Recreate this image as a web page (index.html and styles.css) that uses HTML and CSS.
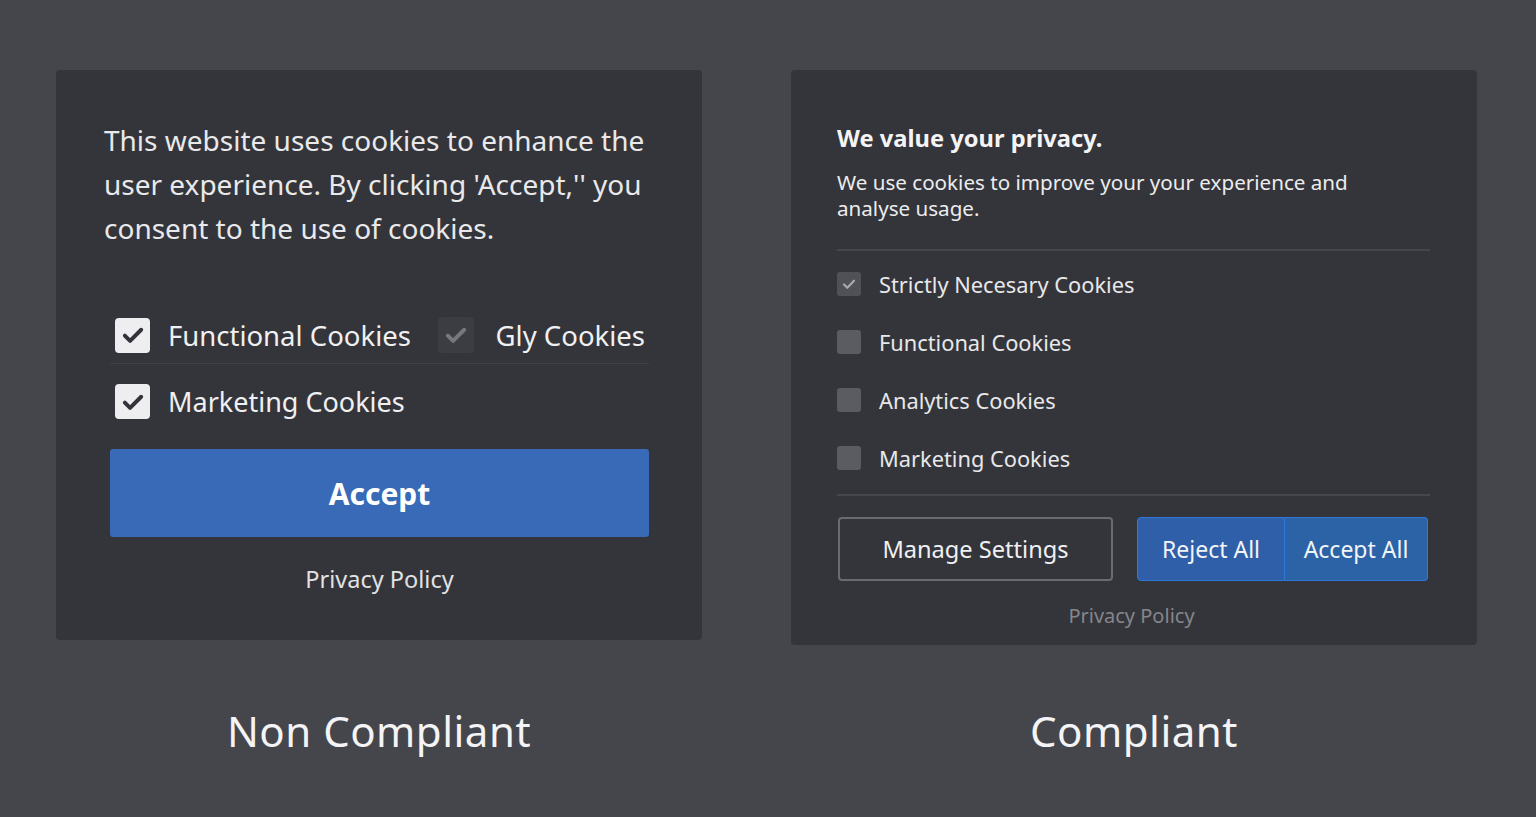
FILE: index.html
```html
<!DOCTYPE html>
<html lang="en">
<head>
    <meta charset="UTF-8">
    <meta name="viewport" content="width=device-width, initial-scale=1.0">
    <title>Cookie Banners - Non Compliant vs Compliant</title>
    <link rel="stylesheet" href="styles.css">
</head>
<body>

<main class="compare">

    <!-- Non compliant banner -->
    <section class="card card-bad">
        <p class="bad-text">This website uses cookies to enhance the<br>user experience. By clicking 'Accept,'' you<br>consent to the use of cookies.</p>

        <div class="bad-options">
            <div class="bad-row bad-row-first">
                <label class="bad-item">
                    <span class="box box-on">
                        <svg viewBox="0 0 24 24"><path d="M5 12.5l4.5 4.5L19 7.5" /></svg>
                    </span>
                    Functional Cookies
                </label>
                <label class="bad-item">
                    <span class="box box-dim">
                        <svg viewBox="0 0 24 24"><path d="M5 12.5l4.5 4.5L19 7.5" /></svg>
                    </span>
                    Gly Cookies
                </label>
            </div>
            <div class="bad-row">
                <label class="bad-item">
                    <span class="box box-on">
                        <svg viewBox="0 0 24 24"><path d="M5 12.5l4.5 4.5L19 7.5" /></svg>
                    </span>
                    Marketing Cookies
                </label>
            </div>
        </div>

        <button class="btn-accept">Accept</button>
        <a class="bad-policy" href="#">Privacy Policy</a>
    </section>

    <!-- Compliant banner -->
    <section class="card card-good">
        <h2 class="good-title">We value your privacy.</h2>
        <p class="good-text">We use cookies to improve your your experience and<br>analyse usage.</p>

        <ul class="good-list">
            <li>
                <span class="sbox sbox-locked">
                    <svg viewBox="0 0 24 24"><path d="M6 12.5l4 4L18 8" /></svg>
                </span>
                Strictly Necesary Cookies
            </li>
            <li><span class="sbox"></span>Functional Cookies</li>
            <li><span class="sbox"></span>Analytics Cookies</li>
            <li><span class="sbox"></span>Marketing Cookies</li>
        </ul>

        <div class="good-actions">
            <button class="btn-outline">Manage Settings</button>
            <div class="btn-pair">
                <button class="btn-blue">Reject All</button>
                <button class="btn-blue">Accept All</button>
            </div>
        </div>
        <a class="good-policy" href="#">Privacy Policy</a>
    </section>

    <h3 class="caption">Non Compliant</h3>
    <h3 class="caption">Compliant</h3>

</main>

</body>
</html>
```

FILE: styles.css
```css
body {
    margin: 0;
    background-color: #45464c;
    font-family: "Noto Sans", "Open Sans", Arial, sans-serif;
    color: #ececee;
}

.compare {
    display: grid;
    grid-template-columns: 646px 686px;
    column-gap: 89px;
    align-items: start;
    padding: 70px 59px 0 56px;
}

.card {
    background-color: #34353a;
    border-radius: 4px;
    box-sizing: border-box;
}

/* ---------- Non compliant ---------- */

.card-bad {
    padding: 48px 53px 40px 54px;
    height: 570px;
}

.bad-text {
    margin: 0 0 0 -6px;
    font-size: 28px;
    line-height: 44px;
    color: #e9e9eb;
}

.bad-options {
    margin-top: 57px;
}

.bad-row {
    display: flex;
    align-items: center;
    justify-content: space-between;
    padding: 19px 4px 0 5px;
}

.bad-row-first {
    height: 56px;
    padding-top: 0;
    border-bottom: 1px solid #414247;
}

.bad-item {
    display: flex;
    align-items: center;
    gap: 18px;
    font-size: 27.5px;
    color: #f0f0f2;
}

.bad-row:last-child .bad-item {
    font-size: 27px;
}

.box {
    width: 35px;
    height: 35px;
    border-radius: 4px;
    display: flex;
    align-items: center;
    justify-content: center;
}

.box svg {
    width: 28px;
    height: 28px;
    fill: none;
    stroke-width: 3.4;
    stroke-linecap: round;
    stroke-linejoin: round;
}

.box-on {
    background-color: #eeeef1;
}

.box-on svg {
    stroke: #33343a;
}

.box-dim {
    width: 36px;
    height: 36px;
    background-color: #3c3d42;
    margin-right: 4px;
}

.box-dim svg {
    stroke: #77787c;
}

.btn-accept {
    display: block;
    width: 100%;
    height: 88px;
    margin-top: 29px;
    border: none;
    border-radius: 3px;
    background-color: #386ab8;
    color: #ffffff;
    font-family: inherit;
    font-size: 30px;
    font-weight: bold;
}

.bad-policy {
    display: block;
    margin-top: 27px;
    text-align: center;
    font-size: 23.5px;
    line-height: 30px;
    color: #e2e2e4;
    text-decoration: none;
}

/* ---------- Compliant ---------- */

.card-good {
    padding: 52px 47px 16px 46px;
    min-height: 573px;
}

.good-title {
    margin: 0;
    font-size: 23.7px;
    line-height: 32px;
    font-weight: bold;
    color: #f4f4f6;
}

.good-text {
    margin: 15px 0 0;
    font-size: 20.6px;
    line-height: 26px;
    color: #ececee;
}

.good-list {
    list-style: none;
    margin: 28px 0 0;
    padding: 4px 0 7px;
    border-top: 2px solid #46474c;
    border-bottom: 2px solid #46474c;
}

.good-list li {
    display: flex;
    align-items: center;
    gap: 18px;
    height: 58px;
    font-size: 21.8px;
    color: #e8e8ea;
}

.sbox {
    width: 24px;
    height: 24px;
    border-radius: 3px;
    background-color: #5b5c61;
    display: flex;
    align-items: center;
    justify-content: center;
}

.sbox-locked {
    background-color: #505156;
}

.sbox svg {
    width: 20px;
    height: 20px;
    fill: none;
    stroke: #a9a9ad;
    stroke-width: 2.6;
    stroke-linecap: round;
    stroke-linejoin: round;
}

.good-actions {
    display: flex;
    justify-content: space-between;
    margin-top: 21px;
    padding: 0 2px 0 1px;
}

.btn-outline {
    width: 275px;
    height: 64px;
    background: transparent;
    border: 2px solid #6a6b70;
    border-radius: 4px;
    color: #f0f0f2;
    font-family: inherit;
    font-size: 23.6px;
}

.btn-pair {
    display: flex;
}

.btn-blue {
    height: 64px;
    border: 1px solid #2f78da;
    background-color: #2c5fa6;
    color: #f2f4f8;
    font-family: inherit;
    font-size: 23px;
}

.btn-blue:first-child {
    width: 148px;
    border-radius: 4px 0 0 4px;
    background-color: #2f5fa8;
}

.btn-blue:last-child {
    width: 143px;
    border-left: none;
    border-radius: 0 4px 4px 0;
    background-color: #2b63a6;
}

.good-policy {
    display: block;
    margin-top: 22px;
    padding-right: 4px;
    text-align: center;
    font-size: 20px;
    line-height: 26px;
    color: #85868b;
    text-decoration: none;
}

/* ---------- Captions ---------- */

.caption {
    margin: 58px 0 0;
    text-align: center;
    font-size: 42px;
    line-height: 56px;
    font-weight: normal;
    letter-spacing: 0.5px;
    color: #f4f4f6;
}
```
